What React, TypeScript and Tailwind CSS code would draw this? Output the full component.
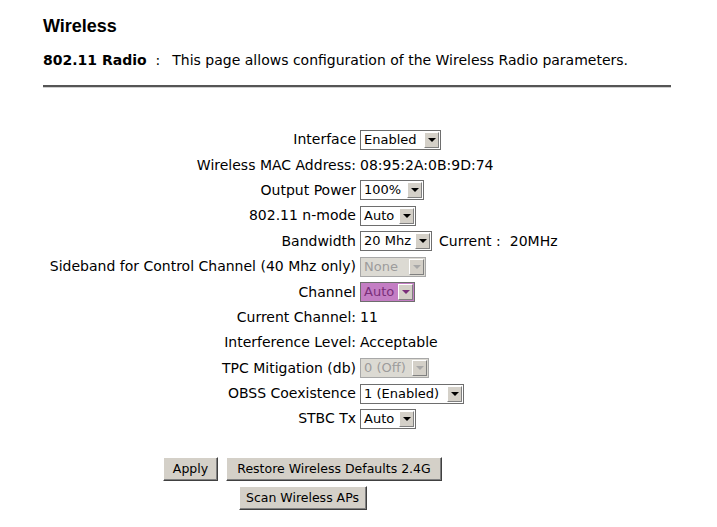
import React from "react";

type SelectKind = "normal" | "disabled" | "purple";

function Select({ value, width, kind = "normal" }: { value: string; width: string; kind?: SelectKind }) {
  const box =
    kind === "purple"
      ? "bg-[#c47ec4] text-[#7a2f7a] border-[#6e6e6e]"
      : kind === "disabled"
      ? "bg-[#dcdad3] text-[#9c9c9c] border-[#a8a8a8]"
      : "bg-white text-black border-[#6e6e6e]";
  const arrow = kind === "disabled" ? "border-t-[#a8a8a8]" : kind === "purple" ? "border-t-[#7a2f7a]" : "border-t-black";
  return (
    <div className={`flex h-[20px] items-stretch border text-[13px] ${box} ${width}`}>
      <span className="flex-1 truncate pl-[3px] leading-[18px]">{value}</span>
      <span className="m-px flex w-[15px] items-center justify-center border border-t-white border-l-white border-r-[#808080] border-b-[#808080] bg-[#d4d0c8]">
        <span className={`h-0 w-0 border-x-[4px] border-t-[4px] border-x-transparent ${arrow}`} />
      </span>
    </div>
  );
}

function Row({ label, children }: { label: string; children: React.ReactNode }) {
  return (
    <div className="flex h-[25.4px] items-center">
      <div className="w-[317px] shrink-0 text-right pr-[4px]">{label}</div>
      <div className="flex items-center">{children}</div>
    </div>
  );
}

function Button({ children, className = "" }: { children: React.ReactNode; className?: string }) {
  return (
    <button
      className={`h-[24px] border border-t-white border-l-white border-r-[#404040] border-b-[#404040] bg-[#d4d0c8] text-center text-[12.5px] leading-[20px] shadow-[inset_-1px_-1px_0_#808080] ${className}`}
    >
      {children}
    </button>
  );
}

export default function App() {
  return (
    <div className="min-h-[527px] w-[717px] bg-white pl-[43px] pt-[15px] text-[14px] text-black [font-family:'DejaVu_Sans',Verdana,sans-serif]">
      <h1 className="text-[18px] font-bold leading-[22px] [font-family:'Liberation_Sans',Arial,sans-serif]">Wireless</h1>
      <p className="mt-[15px] leading-[17px]">
        <span className="font-bold">802.11 Radio</span>
        <span className="ml-[9px]">:</span>
        <span className="ml-[12px]">This page allows configuration of the Wireless Radio parameters.</span>
      </p>
      <div className="mt-[16px] w-[628px] border-t-2 border-t-[#555555] border-b border-b-[#d0d0d0]" />

      <div className="mt-[39px]">
        <Row label="Interface">
          <Select value="Enabled" width="w-[81px]" />
        </Row>
        <Row label="Wireless MAC Address:">
          <span>08:95:2A:0B:9D:74</span>
        </Row>
        <Row label="Output Power">
          <Select value="100%" width="w-[64px]" />
        </Row>
        <Row label="802.11 n-mode">
          <Select value="Auto" width="w-[56px]" />
        </Row>
        <Row label="Bandwidth">
          <Select value="20 Mhz" width="w-[72px]" />
          <span className="ml-[7px]">Current :</span>
          <span className="ml-[9px]">20MHz</span>
        </Row>
        <Row label="Sideband for Control Channel (40 Mhz only)">
          <Select value="None" width="w-[66px]" kind="disabled" />
        </Row>
        <Row label="Channel">
          <Select value="Auto" width="w-[55px]" kind="purple" />
        </Row>
        <Row label="Current Channel:">
          <span>11</span>
        </Row>
        <Row label="Interference Level:">
          <span>Acceptable</span>
        </Row>
        <Row label="TPC Mitigation (db)">
          <Select value="0 (Off)" width="w-[69px]" kind="disabled" />
        </Row>
        <Row label="OBSS Coexistence">
          <Select value="1 (Enabled)" width="w-[104px]" />
        </Row>
        <Row label="STBC Tx">
          <Select value="Auto" width="w-[56px]" />
        </Row>
      </div>

      <div className="mt-[25px] flex w-[519px] flex-col items-center gap-[5px]">
        <div className="flex gap-[8px]">
          <Button className="w-[55px]">Apply</Button>
          <Button className="w-[216px]">Restore Wireless Defaults 2.4G</Button>
        </div>
        <Button className="w-[128px]">Scan Wireless APs</Button>
      </div>
    </div>
  );
}
